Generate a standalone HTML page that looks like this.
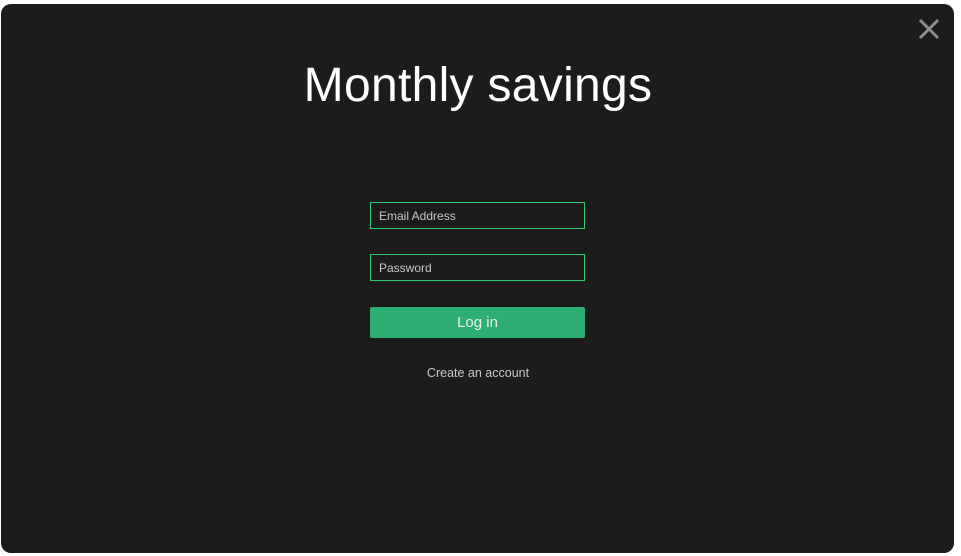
<!DOCTYPE html>
<html><head><style>
html,body{margin:0;padding:0;background:#fff;width:961px;height:556px;overflow:hidden;font-family:"Liberation Sans",sans-serif}
.panel{position:absolute;left:1px;top:4px;width:953px;height:549px;background:#1c1c1c;border-radius:10px}
h1{position:absolute;left:0;width:954px;top:54px;margin:0;text-align:center;color:#fff;font-weight:normal;font-size:48px;line-height:56px;letter-spacing:0.3px}
.in{position:absolute;left:369px;width:213px;height:25px;border:1px solid #2ecc71;color:#c8c8c8;font-size:12px;line-height:26px}
.in span{margin-left:8px}
.btn{position:absolute;left:369px;top:303px;width:215px;height:31px;background:#2eaf72;border-radius:2px;color:#eee;text-align:center;font-size:15px;line-height:32px}
.link{position:absolute;left:0;width:954px;top:362px;text-align:center;color:#c8c8c8;font-size:12.5px}
</style></head><body>
<div class="panel">
<svg style="position:absolute;left:917px;top:14px" width="22" height="22"><path d="M2 2L20 20M20 2L2 20" stroke="#8c8c8c" stroke-width="3"/></svg>
<h1>Monthly savings</h1>
<div class="in" style="top:198px"><span>Email Address</span></div>
<div class="in" style="top:250px"><span>Password</span></div>
<div class="btn">Log in</div>
<div class="link">Create an account</div>
</div>
</body></html>
